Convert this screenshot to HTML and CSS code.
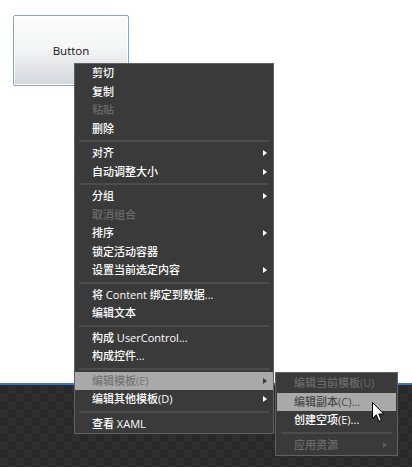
FILE: index.html
```html
<!DOCTYPE html>
<html lang="zh">
<head>
<meta charset="utf-8">
<link rel="stylesheet" href="styles.css">
</head>
<body>
<div class="canvas">
  <div class="design">
    <div class="btn">Button</div>
  </div>
  <div class="artboard"></div>
</div>

<div class="menu main">
  <div class="item"><span class="label">剪切</span></div>
  <div class="item"><span class="label">复制</span></div>
  <div class="item disabled"><span class="label">粘贴</span></div>
  <div class="item"><span class="label">删除</span></div>
  <div class="sep"></div>
  <div class="item"><span class="label">对齐</span><span class="arrow"></span></div>
  <div class="item"><span class="label">自动调整大小</span><span class="arrow"></span></div>
  <div class="sep"></div>
  <div class="item"><span class="label">分组</span><span class="arrow"></span></div>
  <div class="item disabled"><span class="label">取消组合</span></div>
  <div class="item"><span class="label">排序</span><span class="arrow"></span></div>
  <div class="item"><span class="label">锁定活动容器</span></div>
  <div class="item"><span class="label">设置当前选定内容</span><span class="arrow"></span></div>
  <div class="sep"></div>
  <div class="item"><span class="label">将 Content 绑定到数据...</span></div>
  <div class="item"><span class="label">编辑文本</span></div>
  <div class="sep"></div>
  <div class="item"><span class="label">构成 UserControl...</span></div>
  <div class="item"><span class="label">构成控件...</span></div>
  <div class="sep"></div>
  <div class="item active"><span class="label">编辑模板(E)</span><span class="arrow"></span></div>
  <div class="item"><span class="label">编辑其他模板(D)</span><span class="arrow"></span></div>
  <div class="sep"></div>
  <div class="item"><span class="label">查看 XAML</span></div>
</div>

<div class="menu sub">
  <div class="item disabled"><span class="label">编辑当前模板(U)</span></div>
  <div class="item active dark"><span class="label">编辑副本(C)...</span></div>
  <div class="item"><span class="label">创建空项(E)...</span></div>
  <div class="sep"></div>
  <div class="item disabled"><span class="label">应用资源</span><span class="arrow"></span></div>
</div>

<svg class="cursor" width="13" height="21" viewBox="0 0 13 21">
  <path d="M0.5 0.5 L0.5 16.5 L4.3 12.8 L7 19.3 L9.4 18.3 L6.8 12 L11.8 12 Z" fill="#ffffff" stroke="#000000" stroke-width="1" stroke-linejoin="miter"/>
</svg>
</body>
</html>
```

FILE: styles.css
```css
html, body {
  margin: 0;
  padding: 0;
}
body {
  width: 412px;
  height: 467px;
  overflow: hidden;
  background: #ffffff;
  font-family: "Open Sans", "Noto Sans CJK SC", sans-serif;
}
.canvas {
  display: flex;
  flex-direction: column;
  height: 467px;
}
.design {
  height: 383px;
  background: #ffffff;
  padding: 15px 0 0 13px;
  box-sizing: border-box;
}
.btn {
  width: 116px;
  height: 71px;
  box-sizing: border-box;
  border: 1px solid #7fa4d8;
  border-radius: 2px;
  box-shadow: inset 0 0 0 1px #ffffff;
  background: linear-gradient(#fbfbfb 0%, #f5f6f6 45%, #e2e4e7 75%, #d3d7dc 100%);
  display: flex;
  align-items: center;
  justify-content: center;
  font-size: 11.5px;
  color: #111111;
}
.artboard {
  flex: 1;
  border-top: 2px solid #3a73cc;
  background-color: #2b2b2b;
  background-image: conic-gradient(#2f2f2f 25%, #282828 0 50%, #2f2f2f 0 75%, #282828 0);
  background-size: 16px 16px;
}
.menu {
  position: absolute;
  box-sizing: border-box;
  background: #3a3a3a;
  border: 1px solid #616161;
  font-size: 11px;
  font-weight: 500;
  color: #ffffff;
}
.main {
  left: 74px;
  top: 63px;
  width: 200px;
}
.sub {
  left: 275px;
  top: 372px;
  width: 123px;
  padding: 1px;
}
.item {
  height: 18.5px;
  line-height: 18.5px;
  display: flex;
  align-items: center;
  padding: 0 6px 0 17px;
  white-space: nowrap;
}
.label {
  flex: 1;
}
.arrow {
  width: 0;
  height: 0;
  border-left: 4px solid #ffffff;
  border-top: 3.5px solid transparent;
  border-bottom: 3.5px solid transparent;
}
.sub .arrow {
  margin-right: 3px;
}
.disabled {
  color: #6a6a6a;
}
.disabled .arrow {
  border-left-color: #5c5c5c;
}
.active {
  background: #a9a9a9;
  color: #747474;
}
.active .arrow {
  border-left-color: #3a3a3a;
}
.active.dark {
  color: #484848;
}
.sep {
  height: 2px;
  margin: 2px 4px;
  background: #4c4c4c;
}
.cursor {
  position: absolute;
  left: 372px;
  top: 402px;
}
```
